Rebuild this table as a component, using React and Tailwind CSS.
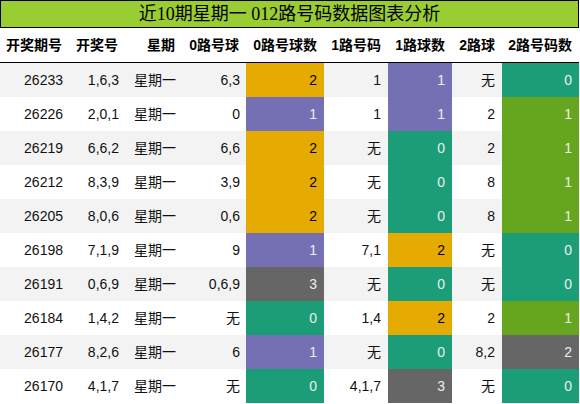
import React from 'react'

const ORANGE = 'bg-[#e6ab02] text-black'
const PURPLE = 'bg-[#7570b3] text-[#eeeeee]'
const GREEN = 'bg-[#1b9e77] text-[#eeeeee]'
const OLIVE = 'bg-[#66a61e] text-[#eeeeee]'
const GRAY = 'bg-[#666666] text-[#eeeeee]'

const headers = ['开奖期号', '开奖号', '星期', '0路号球', '0路号球数', '1路号码', '1路球数', '2路球', '2路号码数']

// [期号, 开奖号, 0路, 0路数, 色, 1路, 1路数, 色, 2路, 2路数, 色]
const rows = [
  ['26233', '1,6,3', '6,3', '2', ORANGE, '1', '1', PURPLE, '无', '0', GREEN],
  ['26226', '2,0,1', '0', '1', PURPLE, '1', '1', PURPLE, '2', '1', OLIVE],
  ['26219', '6,6,2', '6,6', '2', ORANGE, '无', '0', GREEN, '2', '1', OLIVE],
  ['26212', '8,3,9', '3,9', '2', ORANGE, '无', '0', GREEN, '8', '1', OLIVE],
  ['26205', '8,0,6', '0,6', '2', ORANGE, '无', '0', GREEN, '8', '1', OLIVE],
  ['26198', '7,1,9', '9', '1', PURPLE, '7,1', '2', ORANGE, '无', '0', GREEN],
  ['26191', '0,6,9', '0,6,9', '3', GRAY, '无', '0', GREEN, '无', '0', GREEN],
  ['26184', '1,4,2', '无', '0', GREEN, '1,4', '2', ORANGE, '2', '1', OLIVE],
  ['26177', '8,2,6', '6', '1', PURPLE, '无', '0', GREEN, '8,2', '2', GRAY],
  ['26170', '4,1,7', '无', '0', GREEN, '4,1,7', '3', GRAY, '无', '0', GREEN],
]

const cols = 'grid grid-cols-[69px_56px_57px_64px_78px_64px_64px_50px_77px]'

const App = () => {
  return (
    <div className="w-[580px] h-[404px] bg-white font-['Liberation_Sans','Noto_Sans_CJK_SC',sans-serif] text-[14px] text-[#111]">
      <div className="w-[579px] h-[28px] border border-black bg-[#9acd32] flex items-center justify-center font-['Liberation_Serif','Noto_Sans_CJK_SC',serif] text-[18px] leading-none text-black">
        近10期星期一 012路号码数据图表分析
      </div>
      <div className={`${cols} w-[579px] h-[35px] border-b border-black font-bold text-black`}>
        {headers.map((h) => (
          <div key={h} className="flex items-center justify-end pr-[7px]">{h}</div>
        ))}
      </div>
      {rows.map((r, i) => (
        <div key={r[0]} className={`${cols} w-[579px] h-[34px] ${i % 2 === 0 ? 'bg-[#f3f3f3]' : 'bg-white'}`}>
          <div className="flex items-center justify-end pr-[6px]">{r[0]}</div>
          <div className="flex items-center justify-end pr-[6px]">{r[1]}</div>
          <div className="flex items-center justify-end pr-[6px]">星期一</div>
          <div className="flex items-center justify-end pr-[6px]">{r[2]}</div>
          <div className={`flex items-center justify-end pr-[7px] ${r[4]}`}>{r[3]}</div>
          <div className="flex items-center justify-end pr-[7px]">{r[5]}</div>
          <div className={`flex items-center justify-end pr-[7px] ${r[7]}`}>{r[6]}</div>
          <div className="flex items-center justify-end pr-[7px]">{r[8]}</div>
          <div className={`flex items-center justify-end pr-[7px] ${r[10]}`}>{r[9]}</div>
        </div>
      ))}
    </div>
  )
}

export default App
